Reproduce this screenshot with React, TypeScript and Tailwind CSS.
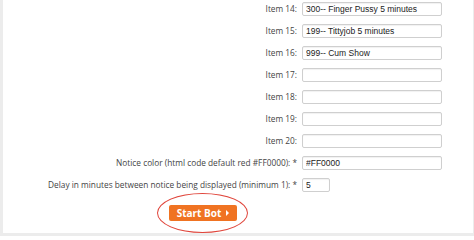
import React from 'react';

const items = [
  { label: 'Item 14:', value: '300-- Finger Pussy 5 minutes' },
  { label: 'Item 15:', value: '199-- Tittyjob 5 minutes' },
  { label: 'Item 16:', value: '999-- Cum Show' },
  { label: 'Item 17:', value: '' },
  { label: 'Item 18:', value: '' },
  { label: 'Item 19:', value: '' },
  { label: 'Item 20:', value: '' },
];

function Row({ label, children }: { label: string; children: React.ReactNode }) {
  return (
    <div className="flex items-center h-[14px]">
      <div className="w-[299px] pr-[5px] text-right text-[8.3px] leading-none text-[#444] whitespace-nowrap">
        {label}
      </div>
      {children}
    </div>
  );
}

function Field({ value, wide = true }: { value: string; wide?: boolean }) {
  return (
    <input
      type="text"
      defaultValue={value}
      className={`${wide ? 'w-[140px]' : 'w-[28px]'} h-[14px] px-[3px] border border-[#cfcfcf] rounded-[2px] bg-white text-[8.5px] text-[#222] shadow-[inset_0_1px_1px_rgba(0,0,0,0.06)] focus:outline-none`}
      style={{ fontFamily: '"Liberation Sans", Arial, sans-serif' }}
    />
  );
}

export default function App() {
  return (
    <div className="w-[474px] h-[236px] bg-[#ececec] flex flex-col" style={{ fontFamily: '"Open Sans", "Noto Sans", sans-serif' }}>
      <div className="flex-1 ml-[3px] mr-[1px] bg-white flex flex-col gap-[8px] pt-[2px]">
        {items.map((it) => (
          <Row key={it.label} label={it.label}>
            <Field value={it.value} />
          </Row>
        ))}
        <Row label="Notice color (html code default red #FF0000): *">
          <Field value="#FF0000" />
        </Row>
        <Row label="Delay in minutes between notice being displayed (minimum 1): *">
          <Field value="5" wide={false} />
        </Row>
        <div className="flex pl-[166px] pt-[5px]">
          <div className="relative flex">
            <div className="absolute left-[-12px] right-[-11px] top-[-12px] bottom-[-12px] rounded-[50%] border-[1.5px] border-[#e0463c]" />
            <button className="relative flex items-center gap-[5px] h-[16px] w-[68px] justify-center rounded-[2px] bg-[#f07322] text-white text-[10px] font-bold leading-none">
              Start Bot
              <span className="w-0 h-0 border-y-[3px] border-y-transparent border-l-[3px] border-l-white" />
            </button>
          </div>
        </div>
      </div>
      <div className="h-[3px]" />
    </div>
  );
}
